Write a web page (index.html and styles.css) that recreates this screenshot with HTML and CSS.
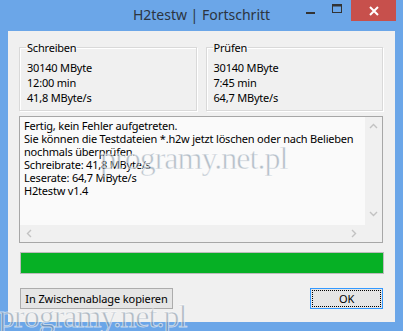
FILE: index.html
```html
<!DOCTYPE html>
<html lang="de">
<head>
    <meta charset="UTF-8">
    <meta name="viewport" content="width=device-width, initial-scale=1.0">
    <title>H2testw | Fortschritt</title>
    <link rel="stylesheet" href="styles.css">
</head>
<body>
    <div class="window">
        <div class="titlebar">
            <div></div>
            <div class="title">H2testw | Fortschritt</div>
            <div class="controls">
                <span class="ctl min"><svg width="10" height="10" viewBox="0 0 10 10"><rect x="0" y="6" width="9" height="2" fill="#333"/></svg></span>
                <span class="ctl max"><svg width="11" height="10" viewBox="0 0 11 10"><rect x="0.5" y="0.5" width="9" height="8" fill="none" stroke="#333"/><rect x="0.5" y="0.5" width="9" height="2" fill="#333"/></svg></span>
                <span class="ctl close"><svg width="10" height="10" viewBox="0 0 10 10"><path d="M1 1 L9 9 M9 1 L1 9" stroke="#fff" stroke-width="2"/></svg></span>
            </div>
        </div>

        <div class="client">
            <div class="groups">
                <fieldset class="group">
                    <legend>Schreiben</legend>
                    <div>30140 MByte</div>
                    <div>12:00 min</div>
                    <div>41,8 MByte/s</div>
                </fieldset>
                <fieldset class="group">
                    <legend>Prüfen</legend>
                    <div>30140 MByte</div>
                    <div>7:45 min</div>
                    <div>64,7 MByte/s</div>
                </fieldset>
            </div>

            <div class="log">
                <div class="log-text">
                    Fertig, kein Fehler aufgetreten.<br>
                    Sie können die Testdateien *.h2w jetzt löschen oder nach Belieben<br>
                    nochmals überprüfen.<br>
                    Schreibrate: 41,8 MByte/s<br>
                    Leserate: 64,7 MByte/s<br>
                    H2testw v1.4
                </div>
                <div class="vscroll">
                    <svg width="9" height="6" viewBox="0 0 9 6"><polyline points="1,5 4.5,1.5 8,5" fill="none" stroke="#c2c2c2" stroke-width="1.4"/></svg>
                    <svg width="9" height="6" viewBox="0 0 9 6"><polyline points="1,1 4.5,4.5 8,1" fill="none" stroke="#c2c2c2" stroke-width="1.4"/></svg>
                </div>
                <div class="hscroll">
                    <svg width="6" height="9" viewBox="0 0 6 9"><polyline points="5,1 1.5,4.5 5,8" fill="none" stroke="#c2c2c2" stroke-width="1.4"/></svg>
                    <svg width="6" height="9" viewBox="0 0 6 9"><polyline points="1,1 4.5,4.5 1,8" fill="none" stroke="#c2c2c2" stroke-width="1.4"/></svg>
                </div>
                <div class="corner"></div>
            </div>

            <div class="progress"><div class="progress-fill" style="width: 100%;"></div></div>

            <div class="buttons">
                <button class="btn btn-copy">In Zwischenablage kopieren</button>
                <button class="btn btn-default"><span>OK</span></button>
            </div>
        </div>
    </div>

    <div class="watermark wm-center">programy.net.pl</div>
    <div class="watermark wm-bottom">programy.net.pl</div>
</body>
</html>
```

FILE: styles.css
```css
body {
    margin: 0;
    width: 403px;
    height: 331px;
    overflow: hidden;
    background-color: #6ba6e8;
    font-family: "Noto Sans", "Open Sans", sans-serif;
    font-size: 11px;
    letter-spacing: -0.2px;
    color: #000;
    position: relative;
}
.window {
    display: flex;
    flex-direction: column;
    height: 100%;
}
.titlebar {
    height: 31px;
    display: grid;
    grid-template-columns: 1fr auto 1fr;
    align-items: start;
}
.title {
    font-size: 14px;
    letter-spacing: 0;
    color: #2b3440;
    line-height: 30px;
}
.controls {
    display: flex;
    justify-content: flex-end;
    padding-right: 7px;
}
.ctl {
    display: flex;
    align-items: center;
    justify-content: center;
    height: 21px;
}
.min {
    width: 26px;
}
.max {
    width: 27px;
    padding-bottom: 4px;
    box-sizing: border-box;
}
.close {
    width: 45px;
    background-color: #c7504c;
}
.client {
    margin: 0 8px 9px 8px;
    flex: 1;
    background-color: #f0f0f0;
    padding: 9px 12px 0 11px;
    display: flex;
    flex-direction: column;
}
.groups {
    display: flex;
    gap: 9px;
}
.group {
    flex: 1;
    margin: 0;
    padding: 5px 0 5px 7px;
    border: 1px solid #d9d9d9;
    box-shadow: inset 1px 1px 0 #fff, 1px 1px 0 #fff;
    line-height: 15px;
}
.group legend {
    padding: 0 1px;
    margin-left: -1px;
    line-height: 15px;
}
.log {
    margin-top: 5px;
    height: 127px;
    box-sizing: border-box;
    border: 1px solid #a7a7a7;
    background-color: #fafafa;
    display: grid;
    grid-template-columns: 1fr 17px;
    grid-template-rows: 1fr 17px;
}
.log-text {
    padding: 2px 4px;
    line-height: 13px;
    white-space: nowrap;
    overflow: hidden;
}
.vscroll {
    background-color: #f0f0f0;
    display: flex;
    flex-direction: column;
    justify-content: space-between;
    align-items: center;
    padding: 6px 0 8px;
}
.hscroll {
    background-color: #f0f0f0;
    display: flex;
    justify-content: space-between;
    align-items: center;
    padding: 0 8px 0 6px;
}
.corner {
    background-color: #f0f0f0;
}
.progress {
    margin: 9px -1px 0 1px;
    height: 22px;
    background-color: #e6e6e6;
    border: 1px solid #bcbcbc;
    box-sizing: border-box;
}
.progress-fill {
    height: 100%;
    background-color: #06b025;
}
.buttons {
    margin-top: 14px;
    display: flex;
    justify-content: space-between;
    padding-left: 1px;
}
.btn {
    font-family: "Noto Sans", "Open Sans", sans-serif;
    font-size: 11px;
    letter-spacing: -0.1px;
    height: 21px;
    padding: 0;
    background-color: #e5e5e5;
    border: 1px solid #acacac;
    color: #000;
    line-height: 17px;
}
.btn-copy {
    width: 153px;
}
.btn-default {
    width: 73px;
    border-color: #3399ff;
    padding: 1px;
}
.btn-default span {
    display: block;
    height: 100%;
    border: 1px dotted #000;
    box-sizing: border-box;
    line-height: 15px;
}
.watermark {
    position: absolute;
    font-family: "Liberation Serif", serif;
    font-size: 32px;
    letter-spacing: -1px;
    color: rgba(110, 130, 150, 0.5);
    -webkit-text-stroke: 1px rgba(255, 255, 255, 0.6);
    white-space: nowrap;
    pointer-events: none;
}
.wm-center {
    left: 100px;
    top: 140px;
}
.wm-bottom {
    left: -1px;
    top: 298px;
}
```
